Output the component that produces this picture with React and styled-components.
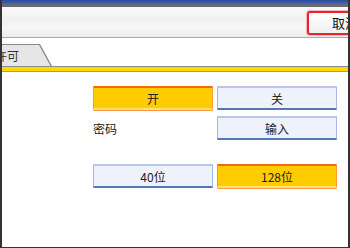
import React from "react";
import styled, { createGlobalStyle } from "styled-components";

const GlobalStyle = createGlobalStyle`
  html, body {
    margin: 0;
    padding: 0;
    background: #ffffff;
  }
  * {
    box-sizing: border-box;
  }
`;

const Frame = styled.div`
  width: 350px;
  height: 248px;
  border-left: 2px solid #333333;
  border-right: 2px solid #333333;
  border-bottom: 1px solid #333333;
  background: #ffffff;
  overflow: hidden;
  font-family: "Noto Sans CJK SC", "Noto Sans", sans-serif;
  font-size: 12px;
  color: #222222;
`;

const TitleBar = styled.div`
  height: 7px;
  background: linear-gradient(#2c4a9c, #4464b4);
  border-bottom: 3px solid #666a72;
`;

const Toolbar = styled.div`
  height: 31px;
  display: flex;
  align-items: center;
  justify-content: flex-end;
  background: linear-gradient(#fafafa 0%, #f1f1f1 40%, #f6f6f6 70%, #ececec 100%);
  border-bottom: 1px solid #aaaaaa;
  overflow: hidden;
`;

const CancelButton = styled.div`
  flex-shrink: 0;
  width: 76px;
  height: 24px;
  margin-right: -35px;
  margin-top: 1px;
  display: flex;
  align-items: center;
  justify-content: center;
  background: linear-gradient(#ffffff, #f0f0f0);
  border: 2px solid #e02828;
  border-radius: 3px;
  box-shadow: 0 0 0 1px #f4b4c0;
  color: #111111;
  font-size: 13px;
`;

const TabRow = styled.div`
  padding-top: 6px;
  display: flex;
`;

const TabOutline = styled.div`
  width: 50px;
  height: 22px;
  padding-top: 1px;
  background: #8a8a8a;
  clip-path: polygon(0 0, 38px 0, 50px 100%, 0 100%);
`;

const TabFace = styled.div`
  width: 49px;
  height: 21px;
  display: flex;
  align-items: center;
  background: #e6e6e6;
  clip-path: polygon(0 0, 37px 0, 48.5px 100%, 0 100%);
  overflow: hidden;
`;

const TabLabel = styled.span`
  margin-left: -7px;
  white-space: nowrap;
  color: #333333;
  font-size: 12px;
`;

const Rule = styled.div`
  height: 6px;
  border-top: 1px solid #8c8c8c;
  border-bottom: 1px solid #9a9a9a;
  background: #ffd800;
`;

const Content = styled.div`
  padding: 14px 0 0 91px;
  display: flex;
  flex-direction: column;
`;

const Row = styled.div`
  display: flex;
  gap: 4px;
  margin-top: ${(p) => p.$top || 0}px;
`;

const Label = styled.div`
  width: 120px;
  height: 24px;
  display: flex;
  align-items: center;
  color: #222222;
`;

const Button = styled.div`
  width: 120px;
  height: 24px;
  display: flex;
  align-items: center;
  justify-content: center;
  border-radius: 1px;
  background: ${(p) => (p.$active ? "#ffcc00" : "#eef2fc")};
  border: 1px solid ${(p) => (p.$active ? "#ff9a30" : "#a8b8e0")};
  border-top: 2px solid ${(p) => (p.$active ? "#f06a10" : "#b8c6ea")};
  border-bottom: 2px solid ${(p) => (p.$active ? "#ffe070" : "#5a74b4")};
  box-shadow: ${(p) => (p.$active ? "0 1px 0 #ff9a40" : "none")};
  color: #222222;
`;

export default function App() {
  return (
    <>
      <GlobalStyle />
      <Frame>
        <TitleBar />
        <Toolbar>
          <CancelButton>取消</CancelButton>
        </Toolbar>
        <TabRow>
          <TabOutline>
            <TabFace>
              <TabLabel>许可</TabLabel>
            </TabFace>
          </TabOutline>
        </TabRow>
        <Rule />
        <Content>
          <Row>
            <Button $active>开</Button>
            <Button>关</Button>
          </Row>
          <Row $top={6}>
            <Label>密码</Label>
            <Button>输入</Button>
          </Row>
          <Row $top={24}>
            <Button>40位</Button>
            <Button $active>128位</Button>
          </Row>
        </Content>
      </Frame>
    </>
  );
}
